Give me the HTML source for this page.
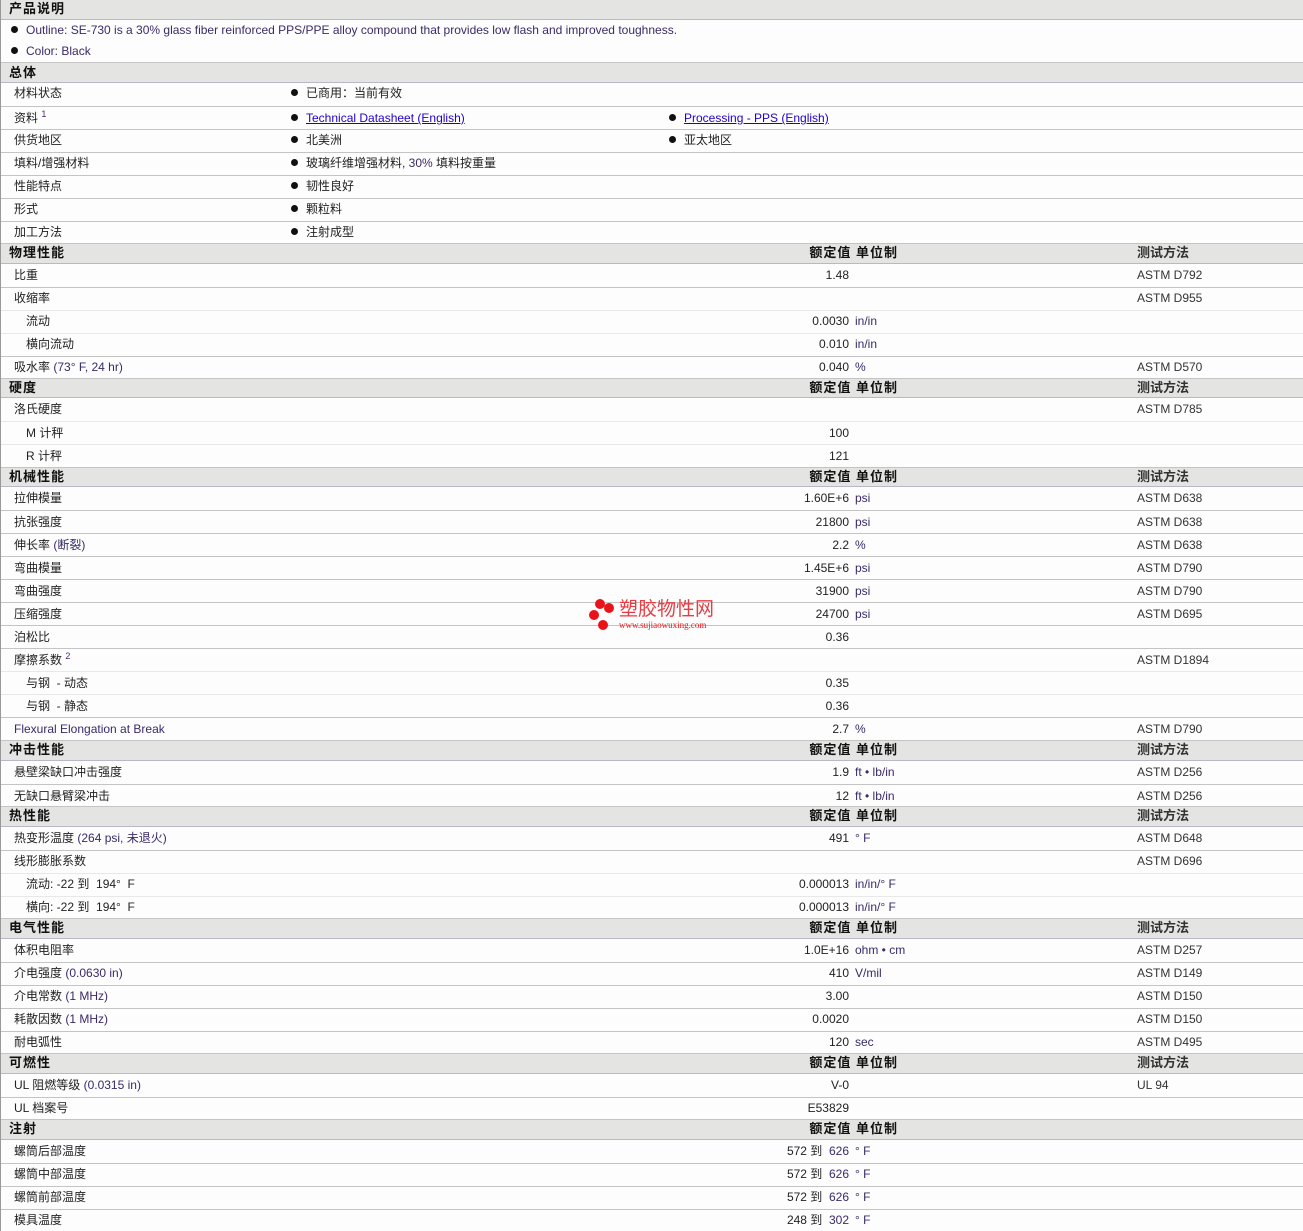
<!DOCTYPE html>
<html><head><meta charset="utf-8"><style>
*{margin:0;padding:0;box-sizing:border-box}
body{width:1303px;height:1231px;background:#fcfdfc;font-family:"Liberation Sans","Noto Sans CJK SC","WenQuanYi Zen Hei",sans-serif;font-size:12px;color:#222;position:relative;overflow:hidden}
.r{position:absolute;left:0;width:1303px;border-top:1px solid #c4c4c4;white-space:nowrap}
.s{border-top:1px solid #e8e8e8}
.h{background:#e4e4e2;font-weight:bold;border-top:1px solid #c4c4c4;border-bottom:1px solid #b8b8c8;color:#111;font-size:13px}
.r span{position:absolute;top:0}
.l{left:14px}.l2{left:26px}.hl{left:9px;letter-spacing:1px}
.v{right:454px;text-align:right}
.u{left:855px;color:#3a2a6a}
.m{left:1137px;color:#333}
.hv{right:405px;letter-spacing:1px}
.b{left:291px}.b2{left:669px}
.dot{display:inline-block;width:7px;height:7px;border-radius:50%;background:#111;margin-right:8px;vertical-align:middle;position:relative;top:-1px}
a{color:#2200cc;text-decoration:underline}
.p{color:#3a2a6a}
sup{font-size:9px;color:#4a2a7a;line-height:0;vertical-align:0;position:relative;top:-5px}
#edge{position:absolute;left:0;top:0;width:1px;height:1231px;background:#999}
</style></head><body>
<div class="r h" style="top:0;height:20px;line-height:18px;border-top:none"><span class="hl">产品说明</span></div>
<div class="r" style="top:20px;height:21px;line-height:21px;border-top:none"><span style="left:11px"><i class="dot"></i><span class="p" style="position:static">Outline: SE-730 is a 30% glass fiber reinforced PPS/PPE alloy compound that provides low flash and improved toughness.</span></span></div>
<div class="r" style="top:41px;height:21px;line-height:21px;border-top:none"><span style="left:11px"><i class="dot"></i><span class="p" style="position:static">Color: Black</span></span></div>
<div class="r h" style="top:62px;height:21px;line-height:19px"><span class="hl">总体</span></div>
<div class="r" style="top:83px;height:23px;line-height:21px;border-top:none"><span class="l">材料状态</span><span class="b"><i class="dot"></i>已商用：当前有效</span></div>
<div class="r" style="top:106px;height:23px;line-height:22px"><span class="l">资料 <sup>1</sup></span><span class="b"><i class="dot"></i><a>Technical Datasheet (English)</a></span><span class="b2"><i class="dot"></i><a>Processing - PPS (English)</a></span></div>
<div class="r" style="top:129px;height:23px;line-height:20px"><span class="l">供货地区</span><span class="b"><i class="dot"></i>北美洲</span><span class="b2"><i class="dot"></i>亚太地区</span></div>
<div class="r" style="top:152px;height:23px;line-height:20px"><span class="l">填料/增强材料</span><span class="b"><i class="dot"></i>玻璃纤维增强材料, <span class="p" style="position:static">30%</span> 填料按重量</span></div>
<div class="r" style="top:175px;height:23px;line-height:20px"><span class="l">性能特点</span><span class="b"><i class="dot"></i>韧性良好</span></div>
<div class="r" style="top:198px;height:23px;line-height:20px"><span class="l">形式</span><span class="b"><i class="dot"></i>颗粒料</span></div>
<div class="r" style="top:221px;height:22px;line-height:20px"><span class="l">加工方法</span><span class="b"><i class="dot"></i>注射成型</span></div>

<div class="r h" style="top:243px;height:21px;line-height:18px"><span class="hl">物理性能</span><span class="hv">额定值 单位制</span><span class="m">测试方法</span></div>
<div class="r" style="top:264px;height:23px;line-height:22px;border-top:none"><span class="l">比重</span><span class="v">1.48</span><span class="m">ASTM D792</span></div>
<div class="r" style="top:287px;height:23px;line-height:21px"><span class="l">收缩率</span><span class="m">ASTM D955</span></div>
<div class="r s" style="top:310px;height:23px;line-height:21px"><span class="l2">流动</span><span class="v">0.0030</span><span class="u">in/in</span></div>
<div class="r s" style="top:333px;height:23px;line-height:21px"><span class="l2">横向流动</span><span class="v">0.010</span><span class="u">in/in</span></div>
<div class="r" style="top:356px;height:22px;line-height:21px"><span class="l">吸水率 <span class="p" style="position:static">(73° F, 24 hr)</span></span><span class="v">0.040</span><span class="u">%</span><span class="m">ASTM D570</span></div>

<div class="r h" style="top:378px;height:20px;line-height:17px"><span class="hl">硬度</span><span class="hv">额定值 单位制</span><span class="m">测试方法</span></div>
<div class="r" style="top:398px;height:23px;line-height:22px;border-top:none"><span class="l">洛氏硬度</span><span class="m">ASTM D785</span></div>
<div class="r s" style="top:421px;height:23px;line-height:22px"><span class="l2">M 计秤</span><span class="v">100</span></div>
<div class="r s" style="top:444px;height:23px;line-height:22px"><span class="l2">R 计秤</span><span class="v">121</span></div>

<div class="r h" style="top:467px;height:20px;line-height:17px"><span class="hl">机械性能</span><span class="hv">额定值 单位制</span><span class="m">测试方法</span></div>
<div class="r" style="top:487px;height:23px;line-height:23px;border-top:none"><span class="l">拉伸模量</span><span class="v">1.60E+6</span><span class="u">psi</span><span class="m">ASTM D638</span></div>
<div class="r" style="top:510px;height:23px;line-height:22px"><span class="l">抗张强度</span><span class="v">21800</span><span class="u">psi</span><span class="m">ASTM D638</span></div>
<div class="r" style="top:533px;height:23px;line-height:22px"><span class="l">伸长率 <span class="p" style="position:static">(断裂)</span></span><span class="v">2.2</span><span class="u">%</span><span class="m">ASTM D638</span></div>
<div class="r" style="top:556px;height:23px;line-height:22px"><span class="l">弯曲模量</span><span class="v">1.45E+6</span><span class="u">psi</span><span class="m">ASTM D790</span></div>
<div class="r" style="top:579px;height:23px;line-height:22px"><span class="l">弯曲强度</span><span class="v">31900</span><span class="u">psi</span><span class="m">ASTM D790</span></div>
<div class="r" style="top:602px;height:23px;line-height:22px"><span class="l">压缩强度</span><span class="v">24700</span><span class="u">psi</span><span class="m">ASTM D695</span></div>
<div class="r" style="top:625px;height:23px;line-height:22px"><span class="l">泊松比</span><span class="v">0.36</span></div>
<div class="r" style="top:648px;height:23px;line-height:22px"><span class="l">摩擦系数 <sup>2</sup></span><span class="m">ASTM D1894</span></div>
<div class="r s" style="top:671px;height:23px;line-height:22px"><span class="l2">与钢 &nbsp;- 动态</span><span class="v">0.35</span></div>
<div class="r s" style="top:694px;height:23px;line-height:22px"><span class="l2">与钢 &nbsp;- 静态</span><span class="v">0.36</span></div>
<div class="r" style="top:717px;height:23px;line-height:22px"><span class="l p">Flexural Elongation at Break</span><span class="v">2.7</span><span class="u">%</span><span class="m">ASTM D790</span></div>

<div class="r h" style="top:740px;height:21px;line-height:18px"><span class="hl">冲击性能</span><span class="hv">额定值 单位制</span><span class="m">测试方法</span></div>
<div class="r" style="top:761px;height:23px;line-height:22px;border-top:none"><span class="l">悬壁梁缺口冲击强度</span><span class="v">1.9</span><span class="u">ft • lb/in</span><span class="m">ASTM D256</span></div>
<div class="r" style="top:784px;height:22px;line-height:22px"><span class="l">无缺口悬臂梁冲击</span><span class="v">12</span><span class="u">ft • lb/in</span><span class="m">ASTM D256</span></div>

<div class="r h" style="top:806px;height:21px;line-height:18px"><span class="hl">热性能</span><span class="hv">额定值 单位制</span><span class="m">测试方法</span></div>
<div class="r" style="top:827px;height:23px;line-height:22px;border-top:none"><span class="l">热变形温度 <span class="p" style="position:static">(264 psi, 未退火)</span></span><span class="v">491</span><span class="u">° F</span><span class="m">ASTM D648</span></div>
<div class="r" style="top:850px;height:23px;line-height:21px"><span class="l">线形膨胀系数</span><span class="m">ASTM D696</span></div>
<div class="r s" style="top:873px;height:23px;line-height:21px"><span class="l2">流动: -22 到 &nbsp;194° &nbsp;F</span><span class="v">0.000013</span><span class="u">in/in/° F</span></div>
<div class="r s" style="top:896px;height:22px;line-height:21px"><span class="l2">横向: -22 到 &nbsp;194° &nbsp;F</span><span class="v">0.000013</span><span class="u">in/in/° F</span></div>

<div class="r h" style="top:918px;height:21px;line-height:18px"><span class="hl">电气性能</span><span class="hv">额定值 单位制</span><span class="m">测试方法</span></div>
<div class="r" style="top:939px;height:23px;line-height:22px;border-top:none"><span class="l">体积电阻率</span><span class="v">1.0E+16</span><span class="u">ohm • cm</span><span class="m">ASTM D257</span></div>
<div class="r" style="top:962px;height:23px;line-height:21px"><span class="l">介电强度 <span class="p" style="position:static">(0.0630 in)</span></span><span class="v">410</span><span class="u">V/mil</span><span class="m">ASTM D149</span></div>
<div class="r" style="top:985px;height:23px;line-height:21px"><span class="l">介电常数 <span class="p" style="position:static">(1 MHz)</span></span><span class="v">3.00</span><span class="m">ASTM D150</span></div>
<div class="r" style="top:1008px;height:23px;line-height:21px"><span class="l">耗散因数 <span class="p" style="position:static">(1 MHz)</span></span><span class="v">0.0020</span><span class="m">ASTM D150</span></div>
<div class="r" style="top:1031px;height:22px;line-height:21px"><span class="l">耐电弧性</span><span class="v">120</span><span class="u">sec</span><span class="m">ASTM D495</span></div>

<div class="r h" style="top:1053px;height:21px;line-height:18px"><span class="hl">可燃性</span><span class="hv">额定值 单位制</span><span class="m">测试方法</span></div>
<div class="r" style="top:1074px;height:23px;line-height:22px;border-top:none"><span class="l">UL 阻燃等级 <span class="p" style="position:static">(0.0315 in)</span></span><span class="v">V-0</span><span class="m">UL 94</span></div>
<div class="r" style="top:1097px;height:22px;line-height:21px"><span class="l">UL 档案号</span><span class="v">E53829</span></div>

<div class="r h" style="top:1119px;height:21px;line-height:18px"><span class="hl">注射</span><span class="hv">额定值 单位制</span></div>
<div class="r" style="top:1140px;height:23px;line-height:22px;border-top:none"><span class="l">螺筒后部温度</span><span class="v">572 到 &nbsp;<span class="p" style="position:static">626</span></span><span class="u">° F</span></div>
<div class="r" style="top:1163px;height:23px;line-height:21px"><span class="l">螺筒中部温度</span><span class="v">572 到 &nbsp;<span class="p" style="position:static">626</span></span><span class="u">° F</span></div>
<div class="r" style="top:1186px;height:23px;line-height:21px"><span class="l">螺筒前部温度</span><span class="v">572 到 &nbsp;<span class="p" style="position:static">626</span></span><span class="u">° F</span></div>
<div class="r" style="top:1209px;height:22px;line-height:21px"><span class="l">模具温度</span><span class="v">248 到 &nbsp;<span class="p" style="position:static">302</span></span><span class="u">° F</span></div>

<div style="position:absolute;left:589px;top:598px;width:130px;height:34px">
<i style="position:absolute;left:6px;top:1px;width:10px;height:10px;border-radius:50%;background:#e8141a"></i>
<i style="position:absolute;left:15px;top:5px;width:10px;height:10px;border-radius:50%;background:#e8141a"></i>
<i style="position:absolute;left:0px;top:12px;width:10px;height:10px;border-radius:50%;background:#e8141a"></i>
<i style="position:absolute;left:9px;top:22px;width:10px;height:10px;border-radius:50%;background:#e8141a"></i>
<span style="position:absolute;left:30px;top:2px;font-size:19px;color:#e83c44;line-height:20px">塑胶物性网</span>
<span style="position:absolute;left:30px;top:23px;font-size:9px;color:#e8141a;font-family:'Liberation Serif',serif;line-height:9px">www.sujiaowuxing.com</span>
</div>
<div id="edge"></div>
</body></html>
